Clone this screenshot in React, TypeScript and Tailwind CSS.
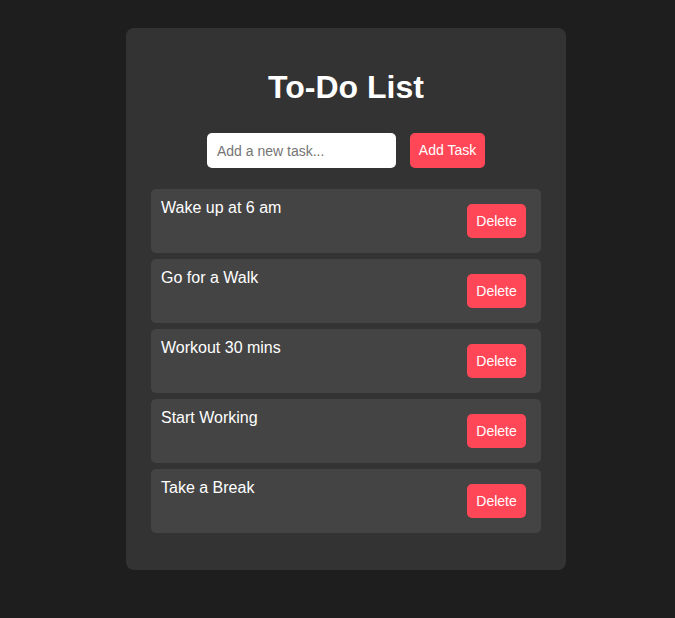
import { useState } from 'react';

const initialTasks = ['Wake up at 6 am', 'Go for a Walk', 'Workout 30 mins', 'Start Working', 'Take a Break'];

export default function App() {
  const [tasks, setTasks] = useState(initialTasks);
  const [text, setText] = useState('');

  const addTask = () => {
    if (!text.trim()) return;
    setTasks([...tasks, text.trim()]);
    setText('');
  };

  return (
    <div className="min-h-screen bg-[#1e1e1e] flex justify-center pt-[28px] pl-[17px] font-['Liberation_Sans',Arial,sans-serif]">
      <div className="w-[440px] h-fit bg-[#333333] rounded-[8px] px-[25px] pt-[41px] pb-[37px] flex flex-col">
        <h1 className="text-white text-[32px] font-bold text-center leading-[37px]">To-Do List</h1>

        {/* input row */}
        <div className="flex justify-center gap-[14px] mt-[27px]">
          <input
            value={text}
            onChange={(e) => setText(e.target.value)}
            placeholder="Add a new task..."
            className="w-[189px] h-[35px] bg-white rounded-[5px] px-[10px] text-[14px] text-black placeholder:text-[#757575] outline-none"
          />
          <button
            onClick={addTask}
            className="w-[75px] h-[35px] bg-[#ff4757] rounded-[5px] text-white text-[14px]"
          >
            Add Task
          </button>
        </div>

        {/* task list */}
        <ul className="mt-[21px] flex flex-col gap-[6px]">
          {tasks.map((t, i) => (
            <li
              key={i}
              className="bg-[#444444] rounded-[5px] flex justify-between items-start pl-[10px] pr-[15px] pt-[10px] pb-[15px]"
            >
              <span className="text-white text-[16px] leading-[18px]">{t}</span>
              <button
                onClick={() => setTasks(tasks.filter((_, j) => j !== i))}
                className="mt-[5px] w-[59px] h-[34px] bg-[#ff4757] rounded-[5px] text-white text-[14px]"
              >
                Delete
              </button>
            </li>
          ))}
        </ul>
      </div>
    </div>
  );
}
